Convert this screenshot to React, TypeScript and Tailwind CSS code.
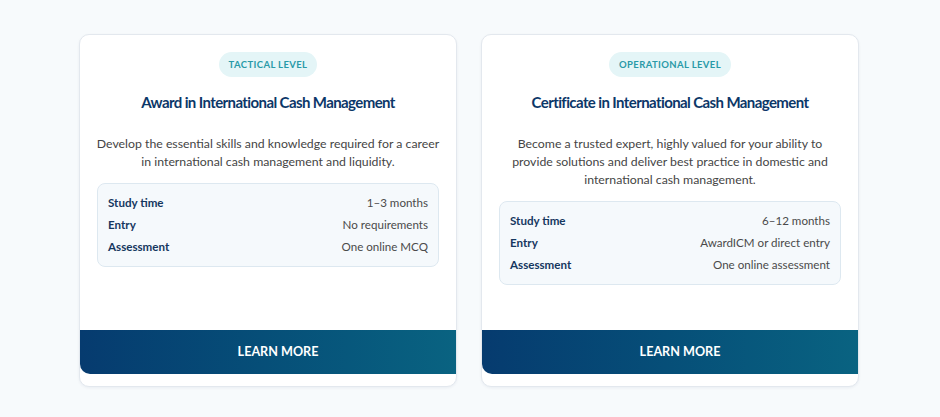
import React from 'react';

const courses = [
  {
    id: 1,
    level: 'Tactical Level',
    title: 'Award in International Cash Management',
    blurb:
      'Develop the essential skills and knowledge required for a career in international cash management and liquidity.',
    facts: [
      ['Study time', '1–3 months'],
      ['Entry', 'No requirements'],
      ['Assessment', 'One online MCQ'],
    ],
  },
  {
    id: 2,
    level: 'Operational Level',
    title: 'Certificate in International Cash Management',
    blurb:
      'Become a trusted expert, highly valued for your ability to provide solutions and deliver best practice in domestic and international cash management.',
    facts: [
      ['Study time', '6–12 months'],
      ['Entry', 'AwardICM or direct entry'],
      ['Assessment', 'One online assessment'],
    ],
  },
];

const App = () => {
  return (
    <div className="min-h-[417px] w-full bg-[#f7fafc] font-['Lato','Noto_Sans',sans-serif]">
      <div className="flex justify-center gap-6 pt-[34px] pr-[2px]">
        {courses.map((course) => (
          <div
            key={course.id}
            className="flex h-[353px] w-[378px] flex-col overflow-hidden rounded-[10px] border border-[#e3e8ee] bg-white pb-[12px] shadow-[0_1px_3px_rgba(15,40,80,0.06)]"
          >
            <div className="flex flex-1 flex-col items-center px-[17px] pt-[17px]">
              <span className="rounded-full bg-[#e4f5f7] px-[10px] py-[6px] text-[9.5px] font-bold uppercase leading-[13px] tracking-[0.04em] text-[#2a9aa8]">
                {course.level}
              </span>
              <h3 className="mt-[15px] text-[15px] font-bold leading-5 tracking-[-0.04em] text-[#0c3768]">
                {course.title}
              </h3>
              <p className="-mx-[3px] mt-[23px] text-center text-[12.3px] leading-[18px] text-[#454545]">
                {course.blurb}
              </p>
              <div className="mt-[12px] w-full rounded-lg border border-[#dde8f0] bg-[#f5f9fc] px-[10px] py-2">
                {course.facts.map(([label, value]) => (
                  <div key={label} className="flex h-[22px] items-center justify-between text-[11.6px]">
                    <span className="font-bold text-[#15375f]">{label}</span>
                    <span className="text-[#4a4a4a]">{value}</span>
                  </div>
                ))}
              </div>
            </div>
            <button className="flex h-[44px] w-[calc(100%+20px)] shrink-0 items-center justify-center rounded-bl-[10px] bg-gradient-to-r from-[#063b6f] to-[#0a6582] text-[12.6px] font-bold text-white">
              LEARN MORE
            </button>
          </div>
        ))}
      </div>
    </div>
  );
};

export default App;
